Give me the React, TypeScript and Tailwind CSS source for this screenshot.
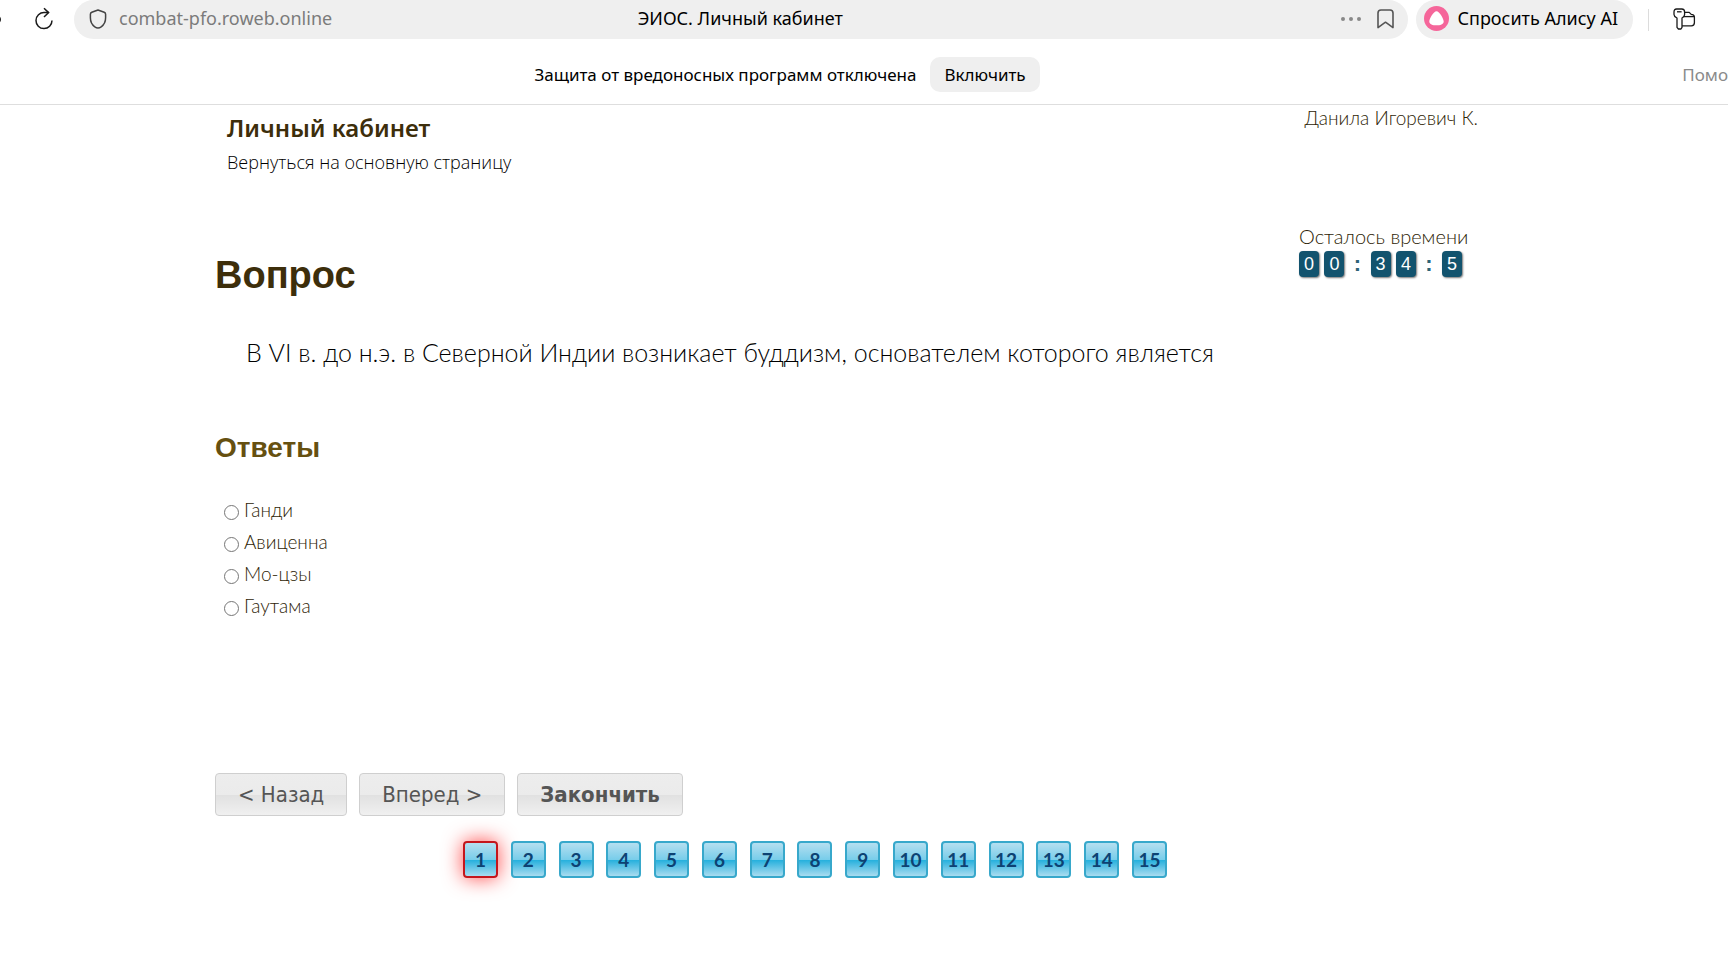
import type { ReactNode } from 'react';

const answers = ['Ганди', 'Авиценна', 'Мо-цзы', 'Гаутама'];
const questions = Array.from({ length: 15 }, (_, i) => i + 1);
const timer = ['0', '0', ':', '3', '4', ':', '5'];

function BrowserBar() {
  return (
    <div className="flex h-[39px] items-center overflow-hidden font-['Noto_Sans','Open_Sans',sans-serif] text-[18px] text-black">
      <span className="-ml-2 size-[9px] shrink-0 rounded-full bg-[#222]" />
      <button type="button" aria-label="Обновить" className="ml-[34px] shrink-0 pb-0.5">
        <svg width="18" height="24" viewBox="0 0 18 24" fill="none" stroke="#1a1a1a" strokeWidth="1.5">
          <path d="M13.6 5.6H9.2a8 8 0 1 0 7.8 8" />
          <path d="M9 1.2l4.6 4.4L9 10" />
        </svg>
      </button>
      <div className="ml-[21px] flex h-full min-w-0 flex-1 items-center rounded-full bg-[#efefef] pr-[14px] pb-0.5 pl-[15px]">
        <svg
          width="18"
          height="20"
          viewBox="0 0 18 20"
          fill="none"
          stroke="#444"
          strokeWidth="1.5"
          strokeLinejoin="round"
          className="shrink-0"
        >
          <path d="M9 1l6.2 2.2q1.4.6 1.4 2v3.6q0 6-4.4 9-3.2 2.2-6.4 0-4.4-3-4.4-9V5.2q0-1.4 1.4-2z" />
        </svg>
        <span className="ml-3 flex-1 text-[#7b7b7b]">combat-pfo.roweb.online</span>
        <span className="shrink-0 pl-[27px]">ЭИОС. Личный кабинет</span>
        <div className="flex flex-1 items-center justify-end gap-4 pl-[60px]">
          <button type="button" aria-label="Ещё">
            <svg width="20" height="4" viewBox="0 0 20 4" fill="#888">
              <circle cx="2" cy="2" r="2" />
              <circle cx="10" cy="2" r="2" />
              <circle cx="18" cy="2" r="2" />
            </svg>
          </button>
          <button type="button" aria-label="Добавить в закладки">
            <svg width="17" height="20" viewBox="0 0 17 20" fill="none" stroke="#555" strokeWidth="1.6" strokeLinejoin="round">
              <path d="M1 18.6V4q0-3 3-3h9q3 0 3 3v14.6l-7.5-5.4z" />
            </svg>
          </button>
        </div>
      </div>
      <button
        type="button"
        className="ml-2 flex h-full shrink-0 items-center gap-2 rounded-full bg-[#efefef] pr-[15px] pb-0.5 pl-2"
      >
        <svg width="25" height="25" viewBox="0 0 25 25">
          <circle cx="12.5" cy="12.5" r="12.5" fill="#f5669a" />
          <path d="M12.5 5.2c2.8 0 7.2 7.6 7.2 10.2 0 2.9-3.6 3.9-7.2 3.9s-7.2-1-7.2-3.9c0-2.6 4.4-10.2 7.2-10.2z" fill="#fff" />
        </svg>
        Спросить Алису AI
      </button>
      <span className="ml-[15px] h-[22px] w-px shrink-0 bg-[#dcdcdc]" />
      <button type="button" aria-label="Пароли" className="mr-8 ml-6 shrink-0">
        <svg width="23" height="23" viewBox="0 0 23 23" fill="none" stroke="#1a1a1a" strokeWidth="1.3" strokeLinejoin="round">
          <path d="M3.6 1h5.2q2.8 0 2.8 3v2.4q0 2-2.6 3.6v9.4l-1 1.6H5.4l-1.4-1.6V10Q1 8.4 1 6.4V4q0-3 2.6-3z" />
          <path d="M4 3.8h4.6" />
          <path d="M11.6 4.4h4.6l2 2q3.2.2 3.2 2.8v5.6q0 3-3 3H9" />
          <path d="M11 8.6h10.4" />
        </svg>
      </button>
    </div>
  );
}

function ProtectionNotice() {
  return (
    <div className="grid grid-cols-[1fr_auto_1fr] items-center border-b border-[#dedede] pt-[18px] pb-3 font-['Noto_Sans','Open_Sans',sans-serif] text-[17px] text-black">
      <span />
      <div className="mr-[154px] flex items-center gap-[14px]">
        <span>Защита от вредоносных программ отключена</span>
        <button type="button" className="h-[35px] rounded-[10px] bg-[#efefef] px-[14px]">
          Включить
        </button>
      </div>
      <button type="button" className="justify-self-end text-[#8a8a8a]">
        Помо
      </button>
    </div>
  );
}

function NavButton({ children, bold = false }: { children: ReactNode; bold?: boolean }) {
  return (
    <button
      type="button"
      className={`h-[43px] rounded-[4px] border border-[#cfcfcf] bg-[linear-gradient(#ededed_0%,#ebebeb_50%,#e1e1e1_52%,#f0f0f0_100%)] px-[22px] font-['DejaVu_Sans_Condensed','Noto_Sans',sans-serif] text-[22px] leading-none text-[#555] ${bold ? 'font-bold' : ''}`}
    >
      {children}
    </button>
  );
}

function Timer() {
  return (
    <div className="w-[166px] shrink-0 text-[#2e2406]">
      <p className="text-[20px] leading-6 font-light whitespace-nowrap">Осталось времени</p>
      <div className="mt-[3px] flex items-center justify-between pr-[3px] font-['Liberation_Sans',sans-serif] text-[18px] leading-none">
        {timer.map((c, i) =>
          c === ':' ? (
            <span key={i} className="px-1 text-[22px] font-bold text-[#2d6478]">
              :
            </span>
          ) : (
            <span
              key={i}
              className="flex h-[26px] w-5 items-center justify-center rounded-[4px] bg-[#12536e] text-white shadow-[1px_1px_2px_#777]"
            >
              {c}
            </span>
          ),
        )}
      </div>
    </div>
  );
}

export default function App() {
  return (
    <div className="min-h-screen overflow-x-hidden bg-white font-[Lato,sans-serif] text-black">
      <BrowserBar />
      <ProtectionNotice />

      <header className="flex justify-between pr-[250px] pl-[227px]">
        <div className="pt-[7px]">
          <h2 className="font-['Noto_Sans',sans-serif] text-[24px] leading-8 font-semibold text-[#3d2e0b]">Личный кабинет</h2>
          <a href="#" className="block font-['Open_Sans',sans-serif] text-[18px] leading-9 font-light">
            Вернуться на основную страницу
          </a>
        </div>
        <p className="text-[19px] leading-[26px] font-light text-[#2e2406]">Данила Игоревич К.</p>
      </header>

      <main className="pr-[263px] pl-[215px]">
        <div className="flex items-start justify-between pt-[44px]">
          <h1 className="pt-[29px] font-['Liberation_Sans',sans-serif] text-[38px] leading-[44px] font-bold text-[#3d2e0b]">
            Вопрос
          </h1>
          <Timer />
        </div>
        <p className="mt-[39px] pl-[31px] text-[25px] leading-8 font-light">
          В VI в. до н.э. в Северной Индии возникает буддизм, основателем которого является
        </p>

        <h2 className="mt-16 font-['Liberation_Sans',sans-serif] text-[28px] leading-8 font-bold text-[#665010]">Ответы</h2>
        <ul className="mt-8 pl-[9px]">
          {answers.map((a) => (
            <li key={a} className="h-8 text-[19px] font-light text-[#2e2406]">
              <label className="flex items-center gap-[5px]">
                <input
                  type="radio"
                  name="answer"
                  className="mt-1 size-[15px] appearance-none rounded-full border border-[#767676] bg-white checked:border-4"
                />
                {a}
              </label>
            </li>
          ))}
        </ul>

        <div className="mt-[149px] flex gap-3">
          <NavButton>&lt; Назад</NavButton>
          <NavButton>Вперед &gt;</NavButton>
          <NavButton bold>Закончить</NavButton>
        </div>
        <nav className="mt-[25px] mr-[50px] flex justify-center">
          <ul className="flex w-[704px] justify-between">
            {questions.map((n) => (
              <li key={n}>
                <button
                  type="button"
                  className={`flex h-[37px] w-[35px] items-center justify-center rounded-[4px] border-2 bg-[linear-gradient(#b5dff0_0%,#78cdea_50%,#26b0dd_52%,#a9dcf0_100%)] text-[19px] leading-none font-bold text-[#0d4273] ${
                    n === 1 ? 'border-[#c4161c] shadow-[0_0_20px_#ff4a4a]' : 'border-[#37a8cb]'
                  }`}
                >
                  {n}
                </button>
              </li>
            ))}
          </ul>
        </nav>
      </main>
    </div>
  );
}
